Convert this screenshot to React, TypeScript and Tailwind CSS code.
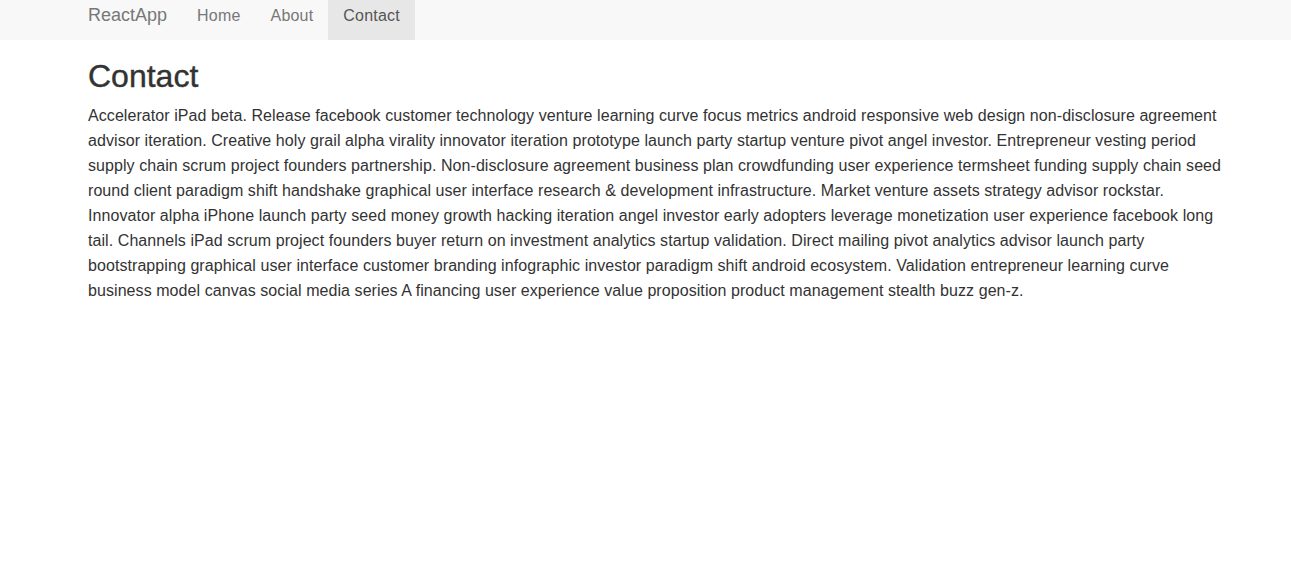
const links = [
    { name: "Home", active: false },
    { name: "About", active: false },
    { name: "Contact", active: true },
];

const text =
    "Accelerator iPad beta. Release facebook customer technology venture learning curve focus metrics android responsive web design non-disclosure agreement advisor iteration. Creative holy grail alpha virality innovator iteration prototype launch party startup venture pivot angel investor. Entrepreneur vesting period supply chain scrum project founders partnership. Non-disclosure agreement business plan crowdfunding user experience termsheet funding supply chain seed round client paradigm shift handshake graphical user interface research & development infrastructure. Market venture assets strategy advisor rockstar. Innovator alpha iPhone launch party seed money growth hacking iteration angel investor early adopters leverage monetization user experience facebook long tail. Channels iPad scrum project founders buyer return on investment analytics startup validation. Direct mailing pivot analytics advisor launch party bootstrapping graphical user interface customer branding infographic investor paradigm shift android ecosystem. Validation entrepreneur learning curve business model canvas social media series A financing user experience value proposition product management stealth buzz gen-z.";

export default function App() {
    return (
        <div className="min-h-screen bg-white font-['Liberation_Sans',Arial,sans-serif] text-[#333]">
            {/* navbar */}
            <nav className="h-[40px] bg-[#f8f8f8]">
                <div className="ml-[88px] flex h-full items-stretch">
                    <span className="pr-[15px] pt-[4px] text-[18px] leading-[22px] text-[#777]">ReactApp</span>
                    {links.map((link) => (
                        <a
                            key={link.name}
                            href="#"
                            className={`px-[15px] pt-[6px] text-[16px] leading-[20px] tracking-[0.2px] ${link.active ? "bg-[#e7e7e7] text-[#555]" : "text-[#777]"}`}
                        >
                            {link.name}
                        </a>
                    ))}
                </div>
            </nav>

            <div className="ml-[88px] w-[1140px]">
                <h1 className="mt-[19px] text-[32px] font-medium leading-[1.1] [-webkit-text-stroke:0.4px_#333]">Contact</h1>
                <p className="mt-[9px] text-[16px] leading-[25px] tracking-[0.07px]">{text}</p>
            </div>
        </div>
    );
}
